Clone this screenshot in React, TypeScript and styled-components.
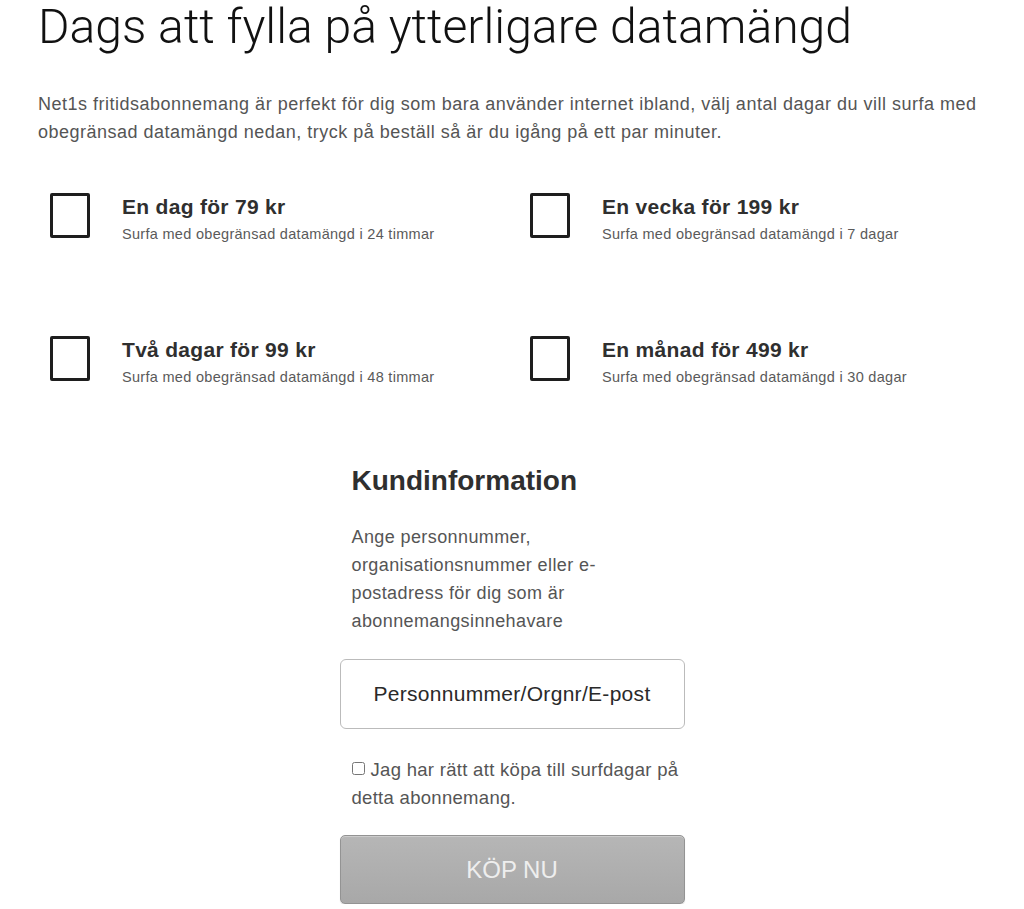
import styled, { createGlobalStyle } from "styled-components";

const GlobalStyle = createGlobalStyle`
    body { margin: 0; background: #fff; font-family: "Liberation Sans", Arial, sans-serif; }
`;

const Page = styled.div`
    padding: 0 38px;
    width: 1024px;
    box-sizing: border-box;
`;

const Title = styled.h1`
    margin: 0;
    padding-top: 1px;
    font-family: Roboto, "Liberation Sans", sans-serif;
    font-size: 48.1px;
    font-weight: 300;
    line-height: 52px;
    color: #111;
`;

const Lead = styled.p`
    margin: 37px 0 0;
    font-size: 18px;
    letter-spacing: 0.5px;
    line-height: 28px;
    color: #555;
`;

const Options = styled.div`
    display: grid;
    grid-template-columns: 480px 1fr;
    row-gap: 92px;
    margin-top: 47px;
    padding-left: 12px;
`;

const Option = styled.label`
    display: flex;
    align-items: flex-start;
    gap: 32px;
    cursor: pointer;
`;

const Box = styled.span`
    width: 34px;
    height: 39px;
    border: 3px solid #1e1e1e;
    border-radius: 2px;
    flex-shrink: 0;
`;

const OptionText = styled.div`
    display: flex;
    flex-direction: column;
    padding-top: 1px;
`;

const OptionTitle = styled.span`
    font-size: 21px;
    letter-spacing: 0.3px;
    font-weight: 700;
    color: #2f2f2f;
    line-height: 26px;
`;

const OptionSub = styled.span`
    font-size: 14.5px;
    letter-spacing: 0.3px;
    color: #5a5a5a;
    line-height: 20px;
    margin-top: 4px;
`;

const Customer = styled.div`
    width: 345px;
    margin: 77px auto 0;
    display: flex;
    flex-direction: column;
`;

const CustomerTitle = styled.h2`
    margin: 0;
    padding-left: 12px;
    font-size: 28px;
    font-weight: 700;
    line-height: 34px;
    color: #2f2f2f;
`;

const CustomerText = styled.p`
    margin: 25px 0 0;
    padding-left: 12px;
    width: 262px;
    font-size: 18px;
    letter-spacing: 0.4px;
    line-height: 28px;
    color: #555;
`;

const Input = styled.input`
    margin-top: 24px;
    height: 70px;
    box-sizing: border-box;
    border: 1px solid #bbb;
    border-radius: 6px;
    font-family: inherit;
    font-size: 21px;
    letter-spacing: 0.3px;
    text-align: center;
    color: #222;
    &::placeholder { color: #2a2a2a; }
`;

const Consent = styled.label`
    margin-top: 27px;
    padding-left: 12px;
    font-size: 18.5px;
    letter-spacing: 0.3px;
    line-height: 28px;
    color: #555;
    & input { margin: 0 6px 0 0; width: 13px; height: 13px; vertical-align: 1px; }
`;

const BuyButton = styled.button`
    margin-top: 23px;
    height: 69px;
    border: 1px solid #939393;
    border-radius: 5px;
    background: linear-gradient(#b6b6b6, #a8a8a8);
    box-shadow: inset 0 1px 0 rgba(255,255,255,0.3), 0 1px 1px rgba(0,0,0,0.15);
    color: #eee;
    font-family: inherit;
    font-size: 24px;
`;

const options = [
    { title: "En dag för 79 kr", sub: "Surfa med obegränsad datamängd i 24 timmar" },
    { title: "En vecka för 199 kr", sub: "Surfa med obegränsad datamängd i 7 dagar" },
    { title: "Två dagar för 99 kr", sub: "Surfa med obegränsad datamängd i 48 timmar" },
    { title: "En månad för 499 kr", sub: "Surfa med obegränsad datamängd i 30 dagar" },
];

export default function App() {
    return (
        <Page>
            <GlobalStyle />
            <Title>Dags att fylla på ytterligare datamängd</Title>
            <Lead>
                Net1s fritidsabonnemang är perfekt för dig som bara använder internet ibland, välj antal dagar du vill surfa med obegränsad datamängd nedan, tryck på beställ så är du igång på ett par minuter.
            </Lead>
            <Options>
                {options.map((o) => (
                    <Option key={o.title}>
                        <Box />
                        <OptionText>
                            <OptionTitle>{o.title}</OptionTitle>
                            <OptionSub>{o.sub}</OptionSub>
                        </OptionText>
                    </Option>
                ))}
            </Options>
            <Customer>
                <CustomerTitle>Kundinformation</CustomerTitle>
                <CustomerText>Ange personnummer, organisationsnummer eller e-postadress för dig som är abonnemangsinnehavare</CustomerText>
                <Input placeholder="Personnummer/Orgnr/E-post" />
                <Consent>
                    <input type="checkbox" />
                    Jag har rätt att köpa till surfdagar på detta abonnemang.
                </Consent>
                <BuyButton>KÖP NU</BuyButton>
            </Customer>
        </Page>
    );
}
